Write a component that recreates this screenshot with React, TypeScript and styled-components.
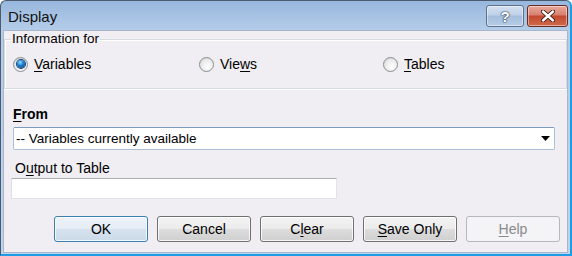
import styled, { createGlobalStyle } from 'styled-components';

const GlobalStyle = createGlobalStyle`
  html, body {
    margin: 0;
    padding: 0;
    background: #ffffff;
  }
  body {
    font-family: "Liberation Sans", Arial, sans-serif;
    font-size: 14px;
    color: #000;
  }
`;

const Window = styled.div`
  width: 572px;
  height: 256px;
  box-sizing: border-box;
  display: flex;
  flex-direction: column;
  background: linear-gradient(#98b7dd, #b5cdea 30px, #bcd4ed);
  border-top: 1px solid #4b5a6c;
  border-left: 1px solid #4b5a6c;
  border-right: 2px solid #1c9de6;
  border-bottom: 2px solid #1c9de6;
  border-radius: 6px 6px 0 0;
  padding: 0 2px 1px 2px;
`;

const TitleBar = styled.div`
  height: 29px;
  display: flex;
  align-items: flex-start;
  justify-content: space-between;
`;

const Title = styled.div`
  font-size: 15px;
  color: #111;
  padding: 7px 0 0 5px;
`;

const TitleButtons = styled.div`
  display: flex;
  gap: 3px;
  padding-top: 4px;
`;

const CaptionButton = styled.div<{ $close?: boolean }>`
  width: ${({ $close }) => ($close ? '41px' : '38px')};
  height: 22px;
  box-sizing: border-box;
  border: 1px solid ${({ $close }) => ($close ? '#6b2a22' : '#5f7289')};
  border-radius: 3px;
  display: flex;
  align-items: center;
  justify-content: center;
  box-shadow: inset 0 0 0 1px rgba(255, 255, 255, 0.45);
  background: ${({ $close }) =>
    $close
      ? 'linear-gradient(#e9a99b, #d7806f 45%, #c2482f 50%, #cf6a4c)'
      : 'linear-gradient(#d3e0ef, #bfd1e7 45%, #a6bedc 50%, #b6cce6)'};
  color: #fff;
  font-weight: bold;
  font-size: 15px;
  text-shadow: 0 0 1px #2c3e55, 0 0 1px #2c3e55, 0 0 2px #2c3e55;
`;

const Client = styled.div`
  flex: 1;
  background: #f0eef2;
  border: 1px solid #a7b6c8;
  display: flex;
  flex-direction: column;
`;

const GroupBox = styled.fieldset`
  margin: 0;
  height: 58px;
  box-sizing: border-box;
  padding: 0 0 0 6px;
  border: 1px solid #d5dbe3;
  box-shadow: inset 1px 1px 0 #fff, 0 1px 0 #fff;
  min-width: 0;
`;

const Legend = styled.legend`
  padding: 0 1px;
  line-height: 16px;
  font-size: 13.5px;
  color: #000;
`;

const RadioRow = styled.div`
  display: grid;
  grid-template-columns: 186px 184px 1fr;
  margin-top: 9px;
`;

const RadioOption = styled.label`
  display: flex;
  align-items: center;
  gap: 6px;
  height: 16px;
  padding-left: 2px;
`;

const RadioCircle = styled.span<{ $checked?: boolean }>`
  width: 13px;
  height: 13px;
  border-radius: 50%;
  border: 1px solid #8a8d92;
  background: radial-gradient(circle at 60% 65%, #ffffff 0%, #ebebeb 55%, #c4c4c4 100%);
  display: flex;
  align-items: center;
  justify-content: center;

  &::after {
    content: '';
    display: ${({ $checked }) => ($checked ? 'block' : 'none')};
    width: 8px;
    height: 8px;
    border-radius: 50%;
    background: radial-gradient(circle at 40% 30%, #8fdcff 0%, #1f86d6 40%, #0a2f6e 100%);
    box-shadow: 0 0 0 1px #163f73;
  }
`;

const Mnemonic = styled.u`
  text-decoration: underline;
  text-underline-offset: 2px;
`;

const Body = styled.div`
  display: flex;
  flex-direction: column;
  padding: 17px 12px 0 9px;
`;

const FieldLabel = styled.div<{ $bold?: boolean; $indent?: number; $gap?: number }>`
  font-weight: ${({ $bold }) => ($bold ? 'bold' : 'normal')};
  line-height: 16px;
  margin-left: ${({ $indent }) => $indent ?? 0}px;
  margin-top: ${({ $gap }) => $gap ?? 0}px;
`;

const Combo = styled.div`
  margin-top: 5px;
  width: 542px;
  height: 23px;
  box-sizing: border-box;
  background: #fff;
  border: 1px solid #a9c0d8;
  border-top-color: #7b9abc;
  border-radius: 2px;
  display: flex;
  align-items: center;
  justify-content: space-between;
  padding: 0 4px 0 2px;
  font-size: 13.5px;
`;

const Arrow = styled.svg`
  width: 9px;
  height: 6px;
`;

const TextBox = styled.div`
  margin: 2px 0 0 -2px;
  width: 326px;
  height: 21px;
  box-sizing: border-box;
  background: #fff;
  border: 1px solid #e2e3ea;
  border-top-color: #abadb3;
  border-left-color: #dbdfe6;
`;

const ButtonRow = styled.div`
  display: flex;
  justify-content: flex-end;
  gap: 9px;
  margin-top: 17px;
  padding-right: 7px;
`;

type Kind = 'default' | 'normal' | 'disabled';

const Button = styled.div<{ $kind?: Kind }>`
  width: 94px;
  height: 26px;
  box-sizing: border-box;
  border-radius: 3px;
  display: flex;
  align-items: center;
  justify-content: center;
  color: ${({ $kind }) => ($kind === 'disabled' ? '#8a8a8a' : '#000')};
  border: 1px solid
    ${({ $kind }) =>
      $kind === 'default' ? '#3c7fb1' : $kind === 'disabled' ? '#b5b8bc' : '#707070'};
  box-shadow: inset 0 0 0 1px
    ${({ $kind }) => ($kind === 'disabled' ? 'transparent' : 'rgba(255,255,255,0.8)')};
  background: ${({ $kind }) =>
    $kind === 'default'
      ? 'linear-gradient(#eef3f9, #e4ecf5 50%, #d6e2ee 50%, #ccdae8)'
      : $kind === 'disabled'
        ? '#f4f3f6'
        : 'linear-gradient(#f3f3f3, #ebebeb 50%, #dddddd 50%, #cfcfcf)'};
`;

export default function App() {
  return (
    <>
      <GlobalStyle />
      <Window>
        <TitleBar>
          <Title>Display</Title>
          <TitleButtons>
            <CaptionButton>?</CaptionButton>
            <CaptionButton $close>
              <svg width="14" height="12" viewBox="0 0 14 12">
                <path
                  d="M2 1.5 L12 10.5 M12 1.5 L2 10.5"
                  stroke="#3a1a14"
                  strokeWidth="4.2"
                  strokeLinecap="round"
                />
                <path
                  d="M2 1.5 L12 10.5 M12 1.5 L2 10.5"
                  stroke="#fff"
                  strokeWidth="2.4"
                  strokeLinecap="round"
                />
              </svg>
            </CaptionButton>
          </TitleButtons>
        </TitleBar>
        <Client>
          <GroupBox>
            <Legend>Information for</Legend>
            <RadioRow>
              <RadioOption>
                <RadioCircle $checked />
                <span>
                  <Mnemonic>V</Mnemonic>ariables
                </span>
              </RadioOption>
              <RadioOption>
                <RadioCircle />
                <span>
                  Vie<Mnemonic>w</Mnemonic>s
                </span>
              </RadioOption>
              <RadioOption>
                <RadioCircle />
                <span>
                  <Mnemonic>T</Mnemonic>ables
                </span>
              </RadioOption>
            </RadioRow>
          </GroupBox>
          <Body>
            <FieldLabel $bold>
              <Mnemonic>F</Mnemonic>rom
            </FieldLabel>
            <Combo>
              <span>-- Variables currently available</span>
              <Arrow viewBox="0 0 9 6">
                <path d="M0 0 H9 L4.5 5 Z" fill="#000" />
              </Arrow>
            </Combo>
            <FieldLabel $indent={2} $gap={10}>
              O<Mnemonic>u</Mnemonic>tput to Table
            </FieldLabel>
            <TextBox />
          </Body>
          <ButtonRow>
            <Button $kind="default">OK</Button>
            <Button>Cancel</Button>
            <Button>
              C<Mnemonic>l</Mnemonic>ear
            </Button>
            <Button>
              <Mnemonic>S</Mnemonic>ave Only
            </Button>
            <Button $kind="disabled">
              <Mnemonic>H</Mnemonic>elp
            </Button>
          </ButtonRow>
        </Client>
      </Window>
    </>
  );
}
